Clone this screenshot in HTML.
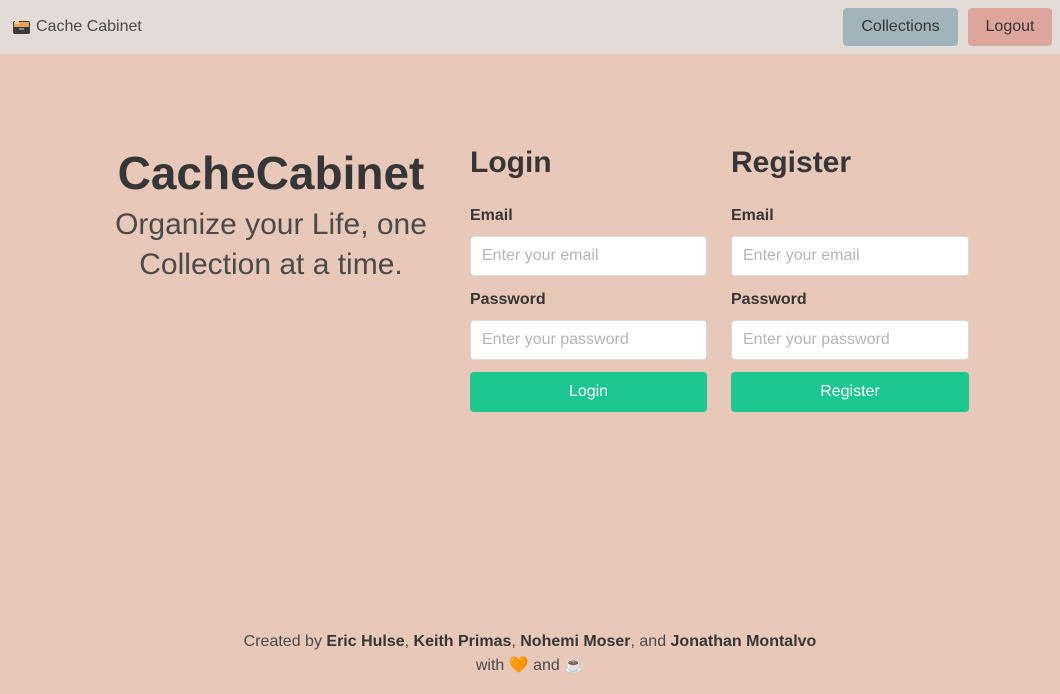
<!DOCTYPE html>
<html><head><meta charset="utf-8"><style>
*{box-sizing:border-box;margin:0;padding:0}
body{width:1060px;height:694px;background:#e7c8b9;font-family:"Liberation Sans",sans-serif;color:#363636;position:relative;overflow:hidden}
.nav{height:55px;background:#e2dbd6;border-bottom:1px solid #d8cfc8;position:relative}
.brand{position:absolute;left:12px;top:18px;font-size:16px;color:#4a4a4a;display:flex;align-items:center;gap:5px}
.btn{position:absolute;top:8px;height:38px;border-radius:4px;font-size:16px;color:#363636;display:flex;align-items:center;justify-content:center}
.h1{position:absolute;left:90px;width:362px;text-align:center;top:146px;font-size:46px;font-weight:bold;color:#363636}
.sub{position:absolute;left:86px;width:370px;text-align:center;top:205px;font-size:30px;color:#4a4a4a;line-height:40px}
.col{position:absolute;top:146px;width:237px}
.col h2{font-size:30px;font-weight:bold;margin-bottom:27px}
.col label{display:block;font-weight:bold;font-size:16px;margin-bottom:11px}
.inp{height:40px;background:#fff;border:1px solid #dbdbdb;border-radius:4px;color:#b5b5b5;font-size:16px;padding:10px 11px;margin-bottom:15px}
.inp.last{margin-bottom:12px}
.go{height:40px;background:#1bc78f;border-radius:4px;color:#fff;font-size:16px;text-align:center;line-height:40px}
.foot{position:absolute;top:630px;width:100%;text-align:center;font-size:16px;line-height:24px;color:#4a4a4a}
.foot b{color:#363636}
</style></head><body>
<div class="nav">
<div class="brand"><svg width="19" height="16" viewBox="0 0 19 16"><rect x="1" y="2" width="17" height="13" rx="2" fill="#3a3a3a"/><rect x="2" y="3" width="15" height="5" fill="#e8a35a"/><rect x="3" y="2" width="4" height="3" fill="#f3d28b"/><rect x="7" y="9" width="5" height="2" fill="#888"/></svg>Cache Cabinet</div>
<div class="btn" style="left:843px;width:115px;background:#a1b4bb">Collections</div>
<div class="btn" style="left:968px;width:84px;background:#dea59d">Logout</div>
</div>
<div class="h1">CacheCabinet</div>
<div class="sub">Organize your Life, one Collection at a time.</div>
<div class="col" style="left:470px"><h2>Login</h2><label>Email</label><div class="inp">Enter your email</div><label>Password</label><div class="inp last">Enter your password</div><div class="go">Login</div></div>
<div class="col" style="left:731px;width:238px"><h2>Register</h2><label>Email</label><div class="inp">Enter your email</div><label>Password</label><div class="inp last">Enter your password</div><div class="go">Register</div></div>
<div class="foot">Created by <b>Eric Hulse</b>, <b>Keith Primas</b>, <b>Nohemi Moser</b>, and <b>Jonathan Montalvo</b><br>with 🧡 and ☕</div>
</body></html>
